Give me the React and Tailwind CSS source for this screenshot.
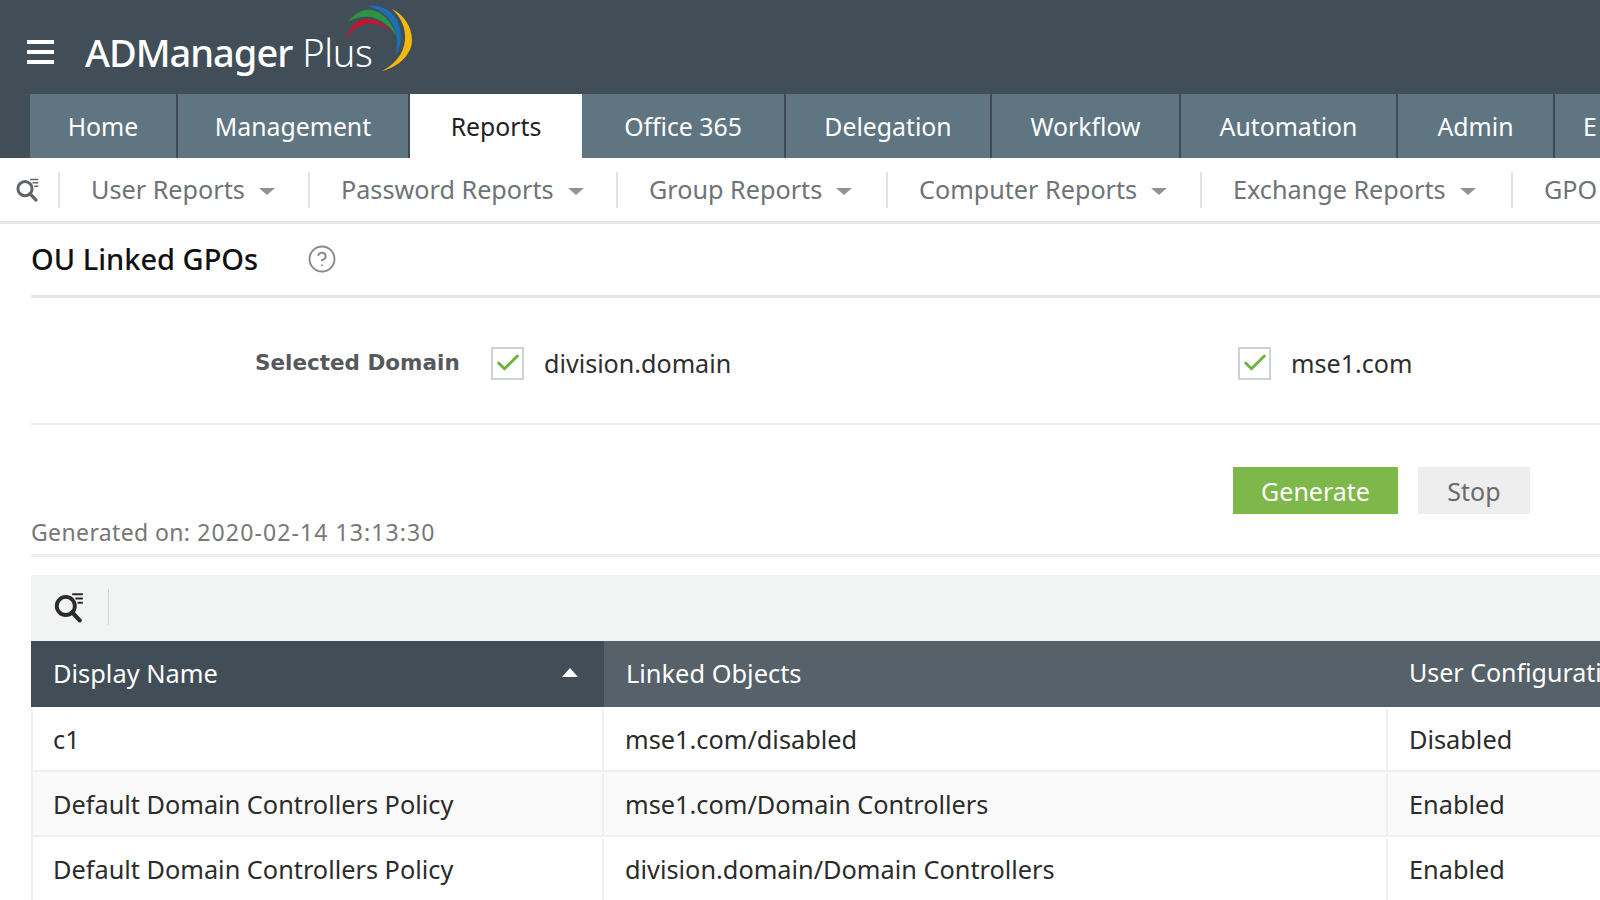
import { HelpCircle, Check } from "lucide-react";

const font = "font-['Noto_Sans','Open_Sans',sans-serif]";

const tabs = [
  { label: "Home", cls: "w-[148px]" },
  { label: "Management", cls: "w-[232px]" },
  { label: "Reports", cls: "w-[172px]", active: true },
  { label: "Office 365", cls: "w-[204px]" },
  { label: "Delegation", cls: "w-[206px]" },
  { label: "Workflow", cls: "w-[189px]" },
  { label: "Automation", cls: "w-[217px]" },
  { label: "Admin", cls: "w-[157px]" },
  { label: "E", cls: "w-[60px] justify-start pl-[28px]" },
];

const subItems = [
  { label: "User Reports", cls: "w-[250px]" },
  { label: "Password Reports", cls: "w-[308px]" },
  { label: "Group Reports", cls: "w-[270px]" },
  { label: "Computer Reports", cls: "w-[314px]" },
  { label: "Exchange Reports", cls: "w-[311px]" },
];

const rows = [
  ["c1", "mse1.com/disabled", "Disabled"],
  ["Default Domain Controllers Policy", "mse1.com/Domain Controllers", "Enabled"],
  ["Default Domain Controllers Policy", "division.domain/Domain Controllers", "Enabled"],
];

function SearchIcon({ className, color }) {
  return (
    <svg viewBox="0 0 30 30" className={className} fill="none" stroke={color}>
      <circle cx="12" cy="14" r="8.5" strokeWidth="3.6" />
      <path d="M18 20l7 7.5" strokeWidth="4" strokeLinecap="round" />
      <path d="M18 3h10M21 7h7M23 11h5" strokeWidth="1.8" />
    </svg>
  );
}

function Caret() {
  return <span className="ml-[14px] mt-[3px] h-0 w-0 border-x-[8px] border-t-[7px] border-x-transparent border-t-[#8f9396]" />;
}

function Logo() {
  return (
    <div className="relative ml-[31px] mt-[10px] flex items-baseline text-[38px] leading-none text-white">
      <span className="font-medium tracking-[-1px]">ADManager</span>
      <span className="ml-[10px] font-light tracking-[-0.4px]">Plus</span>
      <svg viewBox="340 4 80 70" className="absolute left-[255px] top-[-30px] h-[70px] w-[80px]">
        <path d="M345 41C350 27 358 20 366 20C376 20 385 25 391 33C383 27 375 24 367 25C358 26 351 32 345 41Z" fill="#c2152f" />
        <path d="M348 23C355 14 363 10 371 11C382 12 392 23 397 38C390 27 381 20 371 18C362 17 355 19 348 23Z" fill="#2d9344" />
        <path d="M367 7C377 5 388 9 395 18C402 28 404 44 395 58C399 44 397 32 391 23C385 14 377 9 367 7Z" fill="#1a6fb5" />
        <path d="M392 10C404 16 412 28 412 41C412 55 399 68 382 72C394 66 404 55 405 41C406 29 401 18 392 10Z" fill="#f2b90c" />
      </svg>
    </div>
  );
}

function Domain({ label, cls }) {
  return (
    <div className={`flex items-center ${cls}`}>
      <span className="flex h-[33px] w-[33px] items-center justify-center border-2 border-[#cfd2d4] bg-white">
        <Check className="h-[28px] w-[28px] text-[#6cb33f]" strokeWidth={2.5} />
      </span>
      <span className="ml-[20px] text-[25.1px] text-[#2e2e2e]">{label}</span>
    </div>
  );
}

export default function App() {
  return (
    <div className={`h-[900px] w-[1600px] overflow-hidden bg-white ${font}`}>
      <header className="h-[158px] bg-[#414e57]">
        <div className="flex h-[94px] items-center pl-[27px]">
          <div className="mt-[10px] flex w-[27px] flex-col gap-[6px]">
            <span className="h-[4px] bg-white" />
            <span className="h-[4px] bg-white" />
            <span className="h-[4px] bg-white" />
          </div>
          <Logo />
        </div>
        <nav className="flex h-[64px] pl-[30px]">
          {tabs.map((t) => (
            <div
              key={t.label}
              className={`flex shrink-0 items-center justify-center pt-[2px] text-[24.8px] ${t.cls} ${
                t.active ? "bg-white text-[#222]" : "border-r-2 border-[#3f4b53] bg-[#607582] text-white"
              }`}
            >
              {t.label}
            </div>
          ))}
        </nav>
      </header>

      <div className="flex h-[66px] items-center border-b-[3px] border-[#e6e6e6]">
        <div className="w-[58px] pl-[15px]">
          <SearchIcon className="h-[25px] w-[25px]" color="#5f6468" />
        </div>
        {subItems.map((s) => (
          <div key={s.label} className={`flex h-[36px] shrink-0 items-center border-l-2 border-[#e2e2e2] pl-[31px] text-[25.2px] text-[#6e7377] ${s.cls}`}>
            {s.label}
            <Caret />
          </div>
        ))}
        <div className="flex h-[36px] shrink-0 items-center border-l-2 border-[#e2e2e2] pl-[31px] text-[25.2px] text-[#6e7377]">GPO</div>
      </div>

      <main className="pl-[31px]">
        <div className="flex h-[74px] items-center border-b-[3px] border-[#e6e6e6] pb-[1px]">
          <h1 className="text-[29px] font-medium text-[#111]">OU Linked GPOs</h1>
          <HelpCircle className="ml-[49px] h-[30px] w-[30px] text-[#8a8a8a]" strokeWidth={1.5} />
        </div>

        <div className="flex h-[127px] items-center border-b-2 border-[#ececec] pt-[6px]">
          <span className="ml-[224px] w-[236px] font-['DejaVu_Sans'] text-[21.5px] font-bold text-[#55595c]">Selected Domain</span>
          <Domain label="division.domain" cls="w-[747px]" />
          <Domain label="mse1.com" cls="" />
        </div>

        <div className="flex justify-end gap-[20px] pr-[70px] pt-[42px]">
          <button className="h-[47px] w-[165px] bg-[#7eb84a] pt-[2px] text-[25px] text-white">Generate</button>
          <button className="h-[47px] w-[112px] bg-[#eeeeee] pt-[2px] text-[25px] text-[#6b6b6b]">Stop</button>
        </div>

        <div className="flex h-[43px] items-center gap-[7px] border-b-[3px] border-[#eeeeee] pb-[4px] text-[23px] text-[#777]">
          <span className="tracking-[0.37px]">Generated on:</span>
          <span className="tracking-[1.1px]">2020-02-14 13:13:30</span>
        </div>

        <div className="mt-[18px] flex h-[66px] items-center bg-[#f2f3f3] pb-[2px] pl-[22px]">
          <SearchIcon className="h-[32px] w-[32px]" color="#2b2b2b" />
          <span className="ml-[23px] h-[36px] w-[1px] bg-[#d5d6d7]" />
        </div>

        <div className="flex h-[66px] items-center text-[25.4px] text-white">
          <div className="relative flex h-full w-[573px] shrink-0 items-center bg-[#414e57] pb-[2px] pl-[22px]">
            Display Name
            <span className="absolute right-[26px] top-[27px] h-0 w-0 border-x-[8px] border-b-[9px] border-x-transparent border-b-white" />
          </div>
          <div className="flex h-full flex-1 items-center bg-[#566169] pb-[2px] pl-[22px]">
            <span className="w-[783px]">Linked Objects</span>
            <span className="whitespace-nowrap text-[25px]">User Configuration</span>
          </div>
        </div>

        {rows.map((r, i) => (
          <div key={i} className={`flex h-[65px] border-b-2 border-l-2 border-[#f0f0f0] pt-[2px] text-[25.3px] text-[#2b2b2b] ${i === 1 ? "bg-[#fafafa]" : "bg-white"}`}>
            <div className="flex w-[571px] shrink-0 items-center border-r-2 border-[#efefef] pl-[20px]">{r[0]}</div>
            <div className="flex w-[784px] shrink-0 items-center border-r-2 border-[#efefef] pl-[21px]">{r[1]}</div>
            <div className="flex items-center pl-[21px]">{r[2]}</div>
          </div>
        ))}
      </main>
    </div>
  );
}
